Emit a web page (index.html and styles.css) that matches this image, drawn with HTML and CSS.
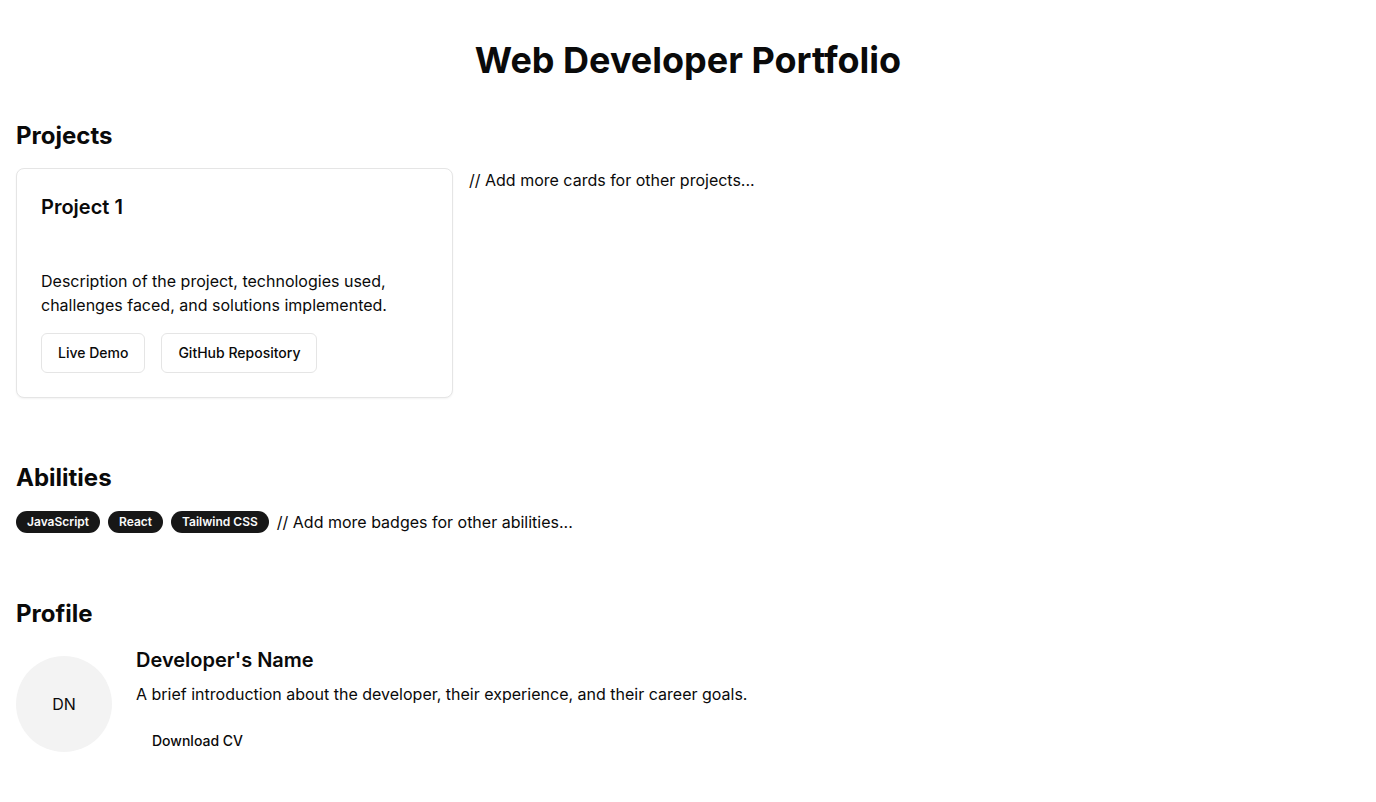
FILE: index.html
```html
<!DOCTYPE html>
<html lang="en">
<head>
<meta charset="utf-8">
<title>Web Developer Portfolio</title>
<link rel="stylesheet" href="styles.css">
</head>
<body>
<main class="page">
  <h1 class="page-title">Web Developer Portfolio</h1>

  <section class="section">
    <h2 class="section-title">Projects</h2>
    <div class="projects">
      <div class="card">
        <h3 class="card-title">Project 1</h3>
        <p class="card-text">Description of the project, technologies used, challenges faced, and solutions implemented.</p>
        <div class="card-actions">
          <button class="btn btn-outline">Live Demo</button>
          <button class="btn btn-outline">GitHub Repository</button>
        </div>
      </div>
      <span class="note">// Add more cards for other projects...</span>
    </div>
  </section>

  <section class="section">
    <h2 class="section-title">Abilities</h2>
    <div class="badges">
      <span class="badge">JavaScript</span>
      <span class="badge">React</span>
      <span class="badge">Tailwind CSS</span>
      <span class="note">// Add more badges for other abilities...</span>
    </div>
  </section>

  <section class="section">
    <h2 class="section-title">Profile</h2>
    <div class="profile">
      <div class="avatar">DN</div>
      <div class="profile-info">
        <h3 class="profile-name">Developer's Name</h3>
        <p class="profile-text">A brief introduction about the developer, their experience, and their career goals.</p>
        <div><button class="btn btn-ghost">Download CV</button></div>
      </div>
    </div>
  </section>
</main>
</body>
</html>
```

FILE: styles.css
```css
* {
  box-sizing: border-box;
  margin: 0;
  padding: 0;
}

html, body {
  background: #ffffff;
}

body {
  font-family: Inter, "Noto Sans", "Liberation Sans", sans-serif;
  color: #0a0a0a;
  font-size: 16px;
  line-height: 24px;
}

.page {
  padding: 16px;
}

.page-title {
  margin-top: 24px;
  margin-bottom: 40px;
  font-size: 36px;
  line-height: 40px;
  font-weight: 700;
  text-align: center;
}

.section {
  margin-bottom: 64px;
}

.section:last-child {
  margin-bottom: 0;
}

.section-title {
  font-size: 24px;
  line-height: 32px;
  font-weight: 700;
  margin-bottom: 16px;
}

.projects {
  display: flex;
  align-items: flex-start;
  gap: 16px;
}

.card {
  width: 437px;
  border: 1px solid #e5e5e5;
  border-radius: 8px;
  box-shadow: 0 1px 2px rgba(0, 0, 0, 0.05);
  padding: 24px;
  background: #fff;
}

.card-title {
  font-size: 20px;
  line-height: 28px;
  font-weight: 600;
  margin-bottom: 48px;
}

.card-text {
  font-size: 16px;
  line-height: 24px;
}

.card-actions {
  display: flex;
  gap: 16px;
  margin-top: 16px;
}

.btn {
  font-family: inherit;
  font-size: 14px;
  line-height: 20px;
  font-weight: 500;
  color: #0a0a0a;
  height: 40px;
  padding: 0 16px;
  border-radius: 6px;
  background: #fff;
  cursor: pointer;
}

.btn-outline {
  border: 1px solid #e5e5e5;
}

.btn-ghost {
  border: none;
  background: transparent;
}

.note {
  font-size: 16px;
  line-height: 24px;
}

.badges {
  display: flex;
  align-items: center;
  gap: 8px;
}

.badge {
  display: inline-block;
  background: #171717;
  color: #fafafa;
  font-size: 12px;
  line-height: 16px;
  font-weight: 600;
  padding: 3px 11px;
  border-radius: 9999px;
}

.profile {
  display: flex;
  align-items: center;
  gap: 24px;
}

.avatar {
  width: 96px;
  height: 96px;
  border-radius: 50%;
  background: #f3f3f3;
  display: flex;
  align-items: center;
  justify-content: center;
  font-size: 16px;
  flex-shrink: 0;
}

.profile-name {
  font-size: 20px;
  line-height: 28px;
  font-weight: 600;
  margin-bottom: 8px;
}

.profile-text {
  margin-bottom: 15px;
}
```
